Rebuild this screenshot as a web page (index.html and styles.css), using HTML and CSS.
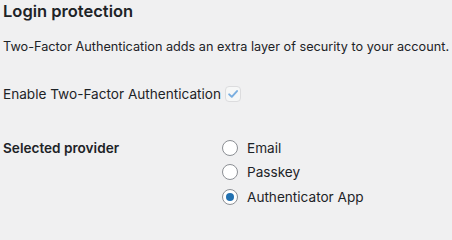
FILE: index.html
```html
<!DOCTYPE html>
<html lang="en">
<head>
<meta charset="utf-8">
<link rel="stylesheet" href="styles.css">
</head>
<body>
<div class="wrap">
  <h2 class="title">Login protection</h2>
  <p class="desc">Two-Factor Authentication adds an extra layer of security to your account.</p>
  <label class="enable">Enable Two-Factor Authentication <span class="checkbox"><svg viewBox="0 0 16 16" width="16" height="16"><path d="M3.6 8.4 L6.6 11.2 L12.6 4.6" fill="none" stroke="#7aaee0" stroke-width="2.2" stroke-linecap="round" stroke-linejoin="round"/></svg></span></label>
  <div class="form-row">
    <div class="th">Selected provider</div>
    <div class="td">
      <label class="opt"><span class="radio"></span>Email</label>
      <label class="opt"><span class="radio"></span>Passkey</label>
      <label class="opt"><span class="radio checked"></span>Authenticator App</label>
    </div>
  </div>
</div>
</body>
</html>
```

FILE: styles.css
```css
html, body {
  margin: 0;
  padding: 0;
  background: #f0f0f1;
}
body {
  font-family: Inter, "Liberation Sans", Arial, sans-serif;
  font-size: 13.6px;
  line-height: 20px;
  color: #1d2327;
}
.wrap {
  padding-left: 3px;
}
.title {
  margin: 0;
  font-size: 16.5px;
  line-height: 22px;
  font-weight: 600;
}
.desc {
  margin: 15.4px 0 0;
  font-size: 12.7px;
  white-space: nowrap;
}
.enable {
  display: flex;
  align-items: center;
  gap: 4px;
  margin-top: 26.6px;
  height: 20px;
}
.checkbox {
  width: 14px;
  height: 14px;
  border: 1px solid #dcdcde;
  border-radius: 4px;
  background: #f6f7f7;
  display: flex;
  align-items: center;
  justify-content: center;
}
.checkbox svg {
  width: 14px;
  height: 14px;
}
.form-row {
  display: flex;
  margin-top: 34px;
}
.th {
  width: 209px;
  padding-right: 10px;
  font-weight: 600;
}
.td {
  display: flex;
  flex-direction: column;
  gap: 4.5px;
}
.opt {
  display: flex;
  align-items: center;
  gap: 9px;
  height: 20px;
}
.radio {
  box-sizing: border-box;
  width: 16px;
  height: 16px;
  border: 1px solid #8c8f94;
  border-radius: 50%;
  background: #fff;
  display: flex;
  align-items: center;
  justify-content: center;
}
.radio.checked::after {
  content: "";
  width: 8px;
  height: 8px;
  border-radius: 50%;
  background: #2271b1;
}
```
